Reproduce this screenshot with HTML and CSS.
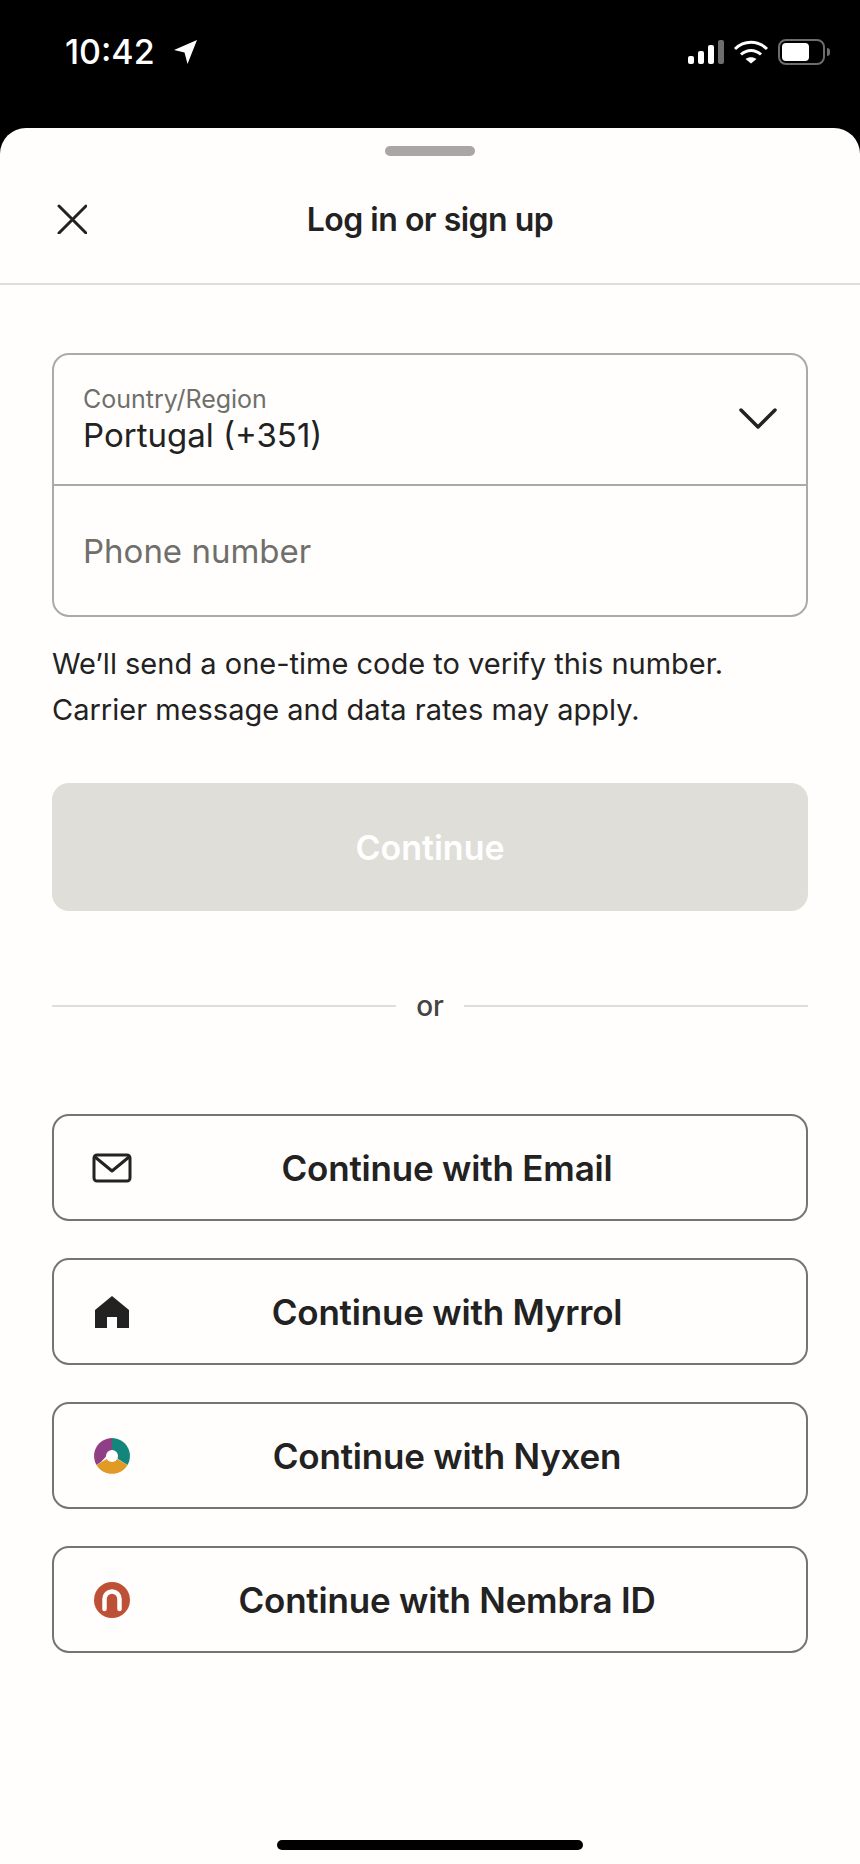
FILE: index.html
```html
<!DOCTYPE html>
<html lang="en">
<head>
  <meta charset="UTF-8" />
  <meta name="viewport" content="width=device-width, initial-scale=1.0"/>
  <title>Log in or sign up</title>
  <link rel="stylesheet" href="styles.css">
</head>
<body>

  <div class="status-bar">
    <div class="status-left">
      <span class="time">10:42</span>
      <svg class="location" width="26" height="26" viewBox="0 0 26 26"><path d="M25 1 2 11l10.500 2.500L15.500 25z" fill="#fff"/></svg>
    </div>
    <div class="status-right">
      <div class="signal">
        <span class="bar bar-1"></span>
        <span class="bar bar-2"></span>
        <span class="bar bar-3"></span>
        <span class="bar bar-4"></span>
      </div>
      <svg class="wifi" width="36" height="24" viewBox="0 0 36 24" fill="none" stroke="#fff" stroke-width="3">
        <path d="M2 9C11 0 25 0 34 9"/>
        <path d="M8 14.500C14 9 22 9 28 14.500"/>
        <path d="M12.500 19 18 23.500 23.500 19C20 16.500 16 16.500 12.500 19z" fill="#fff" stroke="none"/>
      </svg>
      <div class="battery"><span class="battery-level"></span></div>
    </div>
  </div>

  <div class="sheet">
    <div class="handle"></div>

    <div class="sheet-header">
      <svg class="close" width="30" height="30" viewBox="0 0 30 30" fill="none" stroke="#222" stroke-width="3" stroke-linecap="round"><path d="M2 2l27 27M29 2 2 29"/></svg>
      <h1>Log in or sign up</h1>
    </div>

    <div class="content">
      <form class="phone-box">
        <div class="country">
          <div>
            <div class="country-label">Country/Region</div>
            <div class="country-value">Portugal (+351)</div>
          </div>
          <svg class="chevron" width="38" height="22" viewBox="0 0 38 22" fill="none" stroke="#222" stroke-width="3.500" stroke-linecap="round" stroke-linejoin="round"><path d="M2 3l17 17L36 3"/></svg>
        </div>
        <div class="phone">Phone number</div>
      </form>

      <p class="note">We’ll send a one-time code to verify this number.<br>Carrier message and data rates may apply.</p>

      <button type="button" class="continue">Continue</button>

      <div class="divider"><span>or</span></div>

      <div class="providers">
        <button type="button" class="provider">
          <svg class="provider-icon" width="40" height="30" viewBox="0 0 40 30" fill="none" stroke="#222" stroke-width="3" stroke-linejoin="round"><rect x="2" y="2" width="36" height="26" rx="3"/><path d="M3 4l17 14L37 4"/></svg>
          Continue with Email
        </button>
        <button type="button" class="provider">
          <svg class="provider-icon" width="40" height="34" viewBox="0 0 40 34"><path d="M20 1 37 15V33H25V22H15V33H3V15z" fill="#222"/></svg>
          Continue with Myrrol
        </button>
        <button type="button" class="provider">
          <svg class="provider-icon" width="40" height="36" viewBox="0 0 36 36">
            <path d="M18 0V12L7 24 2.500 27A18 18 0 0 1 18 0z" fill="#8f3f86"/>
            <path d="M18 0A18 18 0 0 1 33.500 27L24 21 18 12z" fill="#14857a"/>
            <path d="M2.500 27 18 18 33.500 27A18 18 0 0 1 2.500 27z" fill="#e09a25"/>
            <circle cx="18" cy="18" r="6" fill="#fffefc"/>
          </svg>
          Continue with Nyxen
        </button>
        <button type="button" class="provider">
          <svg class="provider-icon" width="40" height="36" viewBox="0 0 36 36">
            <circle cx="18" cy="18" r="18" fill="#bd5137"/>
            <path d="M10.500 27V17a7.500 7.500 0 0 1 15 0V27" fill="none" stroke="#fffefc" stroke-width="4.500" stroke-linecap="round"/>
          </svg>
          Continue with Nembra ID
        </button>
      </div>
    </div>

    <div class="home-indicator"></div>
  </div>

</body>
</html>
```

FILE: styles.css
```css
* {
  box-sizing: border-box;
}
body {
  margin: 0;
  height: 1864px;
  background: #000;
  font-family: Inter, "Liberation Sans", sans-serif;
  color: #222;
  display: flex;
  flex-direction: column;
}
.status-bar {
  height: 128px;
  flex-shrink: 0;
  padding: 32px 35px 0 65px;
  display: flex;
  justify-content: space-between;
  align-items: flex-start;
  color: #fff;
}
.status-left {
  display: flex;
  align-items: center;
  gap: 17px;
}
.time {
  font-size: 34px;
  line-height: 40px;
  font-weight: 500;
}
.status-right {
  display: flex;
  align-items: center;
  gap: 9px;
  height: 26px;
  margin-top: 7px;
}
.signal {
  display: flex;
  align-items: flex-end;
  gap: 4px;
  height: 24px;
}
.bar {
  width: 6px;
  background: #fff;
  border-radius: 2px;
}
.bar-1 { height: 8px; }
.bar-2 { height: 13px; }
.bar-3 { height: 19px; }
.bar-4 { height: 24px; background: #6d6d6d; }
.battery {
  position: relative;
  width: 47px;
  height: 26px;
  border: 2px solid #6d6d6d;
  border-radius: 8px;
  padding: 2px;
}
.battery::after {
  content: "";
  position: absolute;
  right: -7px;
  top: 7px;
  width: 3px;
  height: 8px;
  background: #6d6d6d;
  border-radius: 0 3px 3px 0;
}
.battery-level {
  display: block;
  width: 27px;
  height: 18px;
  background: #fff;
  border-radius: 4px;
}
.sheet {
  flex: 1;
  background: #fffefc;
  border-radius: 26px 26px 0 0;
  display: flex;
  flex-direction: column;
  align-items: stretch;
}
.handle {
  width: 90px;
  height: 10px;
  margin: 18px auto 0;
  background: #a9a6a4;
  border-radius: 5px;
  flex-shrink: 0;
}
.sheet-header {
  position: relative;
  height: 129px;
  flex-shrink: 0;
  border-bottom: 2px solid #dfded9;
  display: flex;
  align-items: center;
  justify-content: center;
}
.sheet-header h1 {
  margin: 0;
  font-size: 32px;
  font-weight: 600;
  letter-spacing: -0.5px;
}
.close {
  position: absolute;
  left: 57px;
  top: 50%;
  margin-top: -16px;
}
.content {
  padding: 68px 52px 0;
  flex: 1;
}
.phone-box {
  border: 2px solid #abaaa6;
  border-radius: 17px;
}
.country {
  height: 131px;
  border-bottom: 2px solid #abaaa6;
  padding: 28px 29px 0 29px;
  display: flex;
  justify-content: space-between;
  align-items: flex-start;
}
.country-label {
  font-size: 25px;
  line-height: 32px;
  color: #6f6f6b;
}
.country-value {
  font-size: 33px;
  line-height: 40px;
}
.chevron {
  margin-top: 24px;
}
.phone {
  height: 129px;
  padding: 0 29px;
  display: flex;
  align-items: center;
  font-size: 33px;
  color: #6f6f6b;
}
.note {
  margin: 24px 0 0;
  font-size: 29px;
  line-height: 46px;
}
.continue {
  display: block;
  width: 100%;
  height: 128px;
  margin-top: 50px;
  border: none;
  border-radius: 17px;
  background: #dfded9;
  color: #fff;
  font-family: inherit;
  font-size: 34px;
  font-weight: 600;
}
.divider {
  display: flex;
  align-items: center;
  gap: 20px;
  margin-top: 78px;
  font-size: 28px;
  font-weight: 500;
  color: #444;
}
.divider::before, .divider::after {
  content: "";
  flex: 1;
  height: 2px;
  background: #dfded9;
}
.providers {
  margin-top: 91px;
  display: flex;
  flex-direction: column;
  gap: 37px;
}
.provider {
  position: relative;
  height: 107px;
  padding-left: 40px;
  background: transparent;
  border: 2px solid #747470;
  border-radius: 17px;
  color: #222;
  font-family: inherit;
  font-size: 35px;
  font-weight: 600;
  letter-spacing: -0.2px;
}
.provider-icon {
  position: absolute;
  left: 38px;
  top: 50%;
  transform: translateY(-50%);
}
.home-indicator {
  width: 306px;
  height: 10px;
  margin: 0 auto 14px;
  background: #000;
  border-radius: 5px;
  flex-shrink: 0;
}
```
